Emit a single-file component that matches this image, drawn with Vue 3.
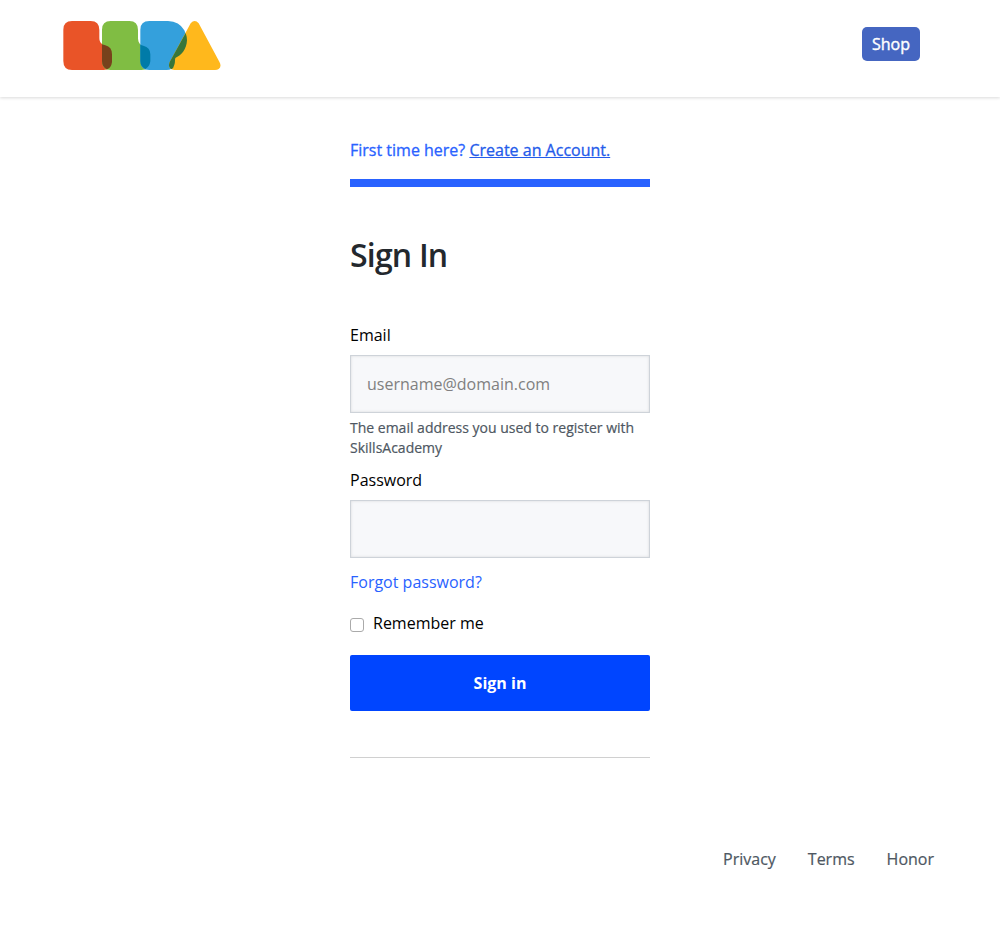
<script setup>
import { ref } from 'vue'

const email = ref('')
const password = ref('')
const remember = ref(false)
const links = ['Privacy', 'Terms', 'Honor']
</script>

<template>
  <div class="page">
    <header class="header">
      <a class="logo" href="#" aria-label="Home">
        <svg width="165" height="51" viewBox="30 30 495 153">
          <path fill="#e95428" d="M66 33H122Q148 33 148 60V84C148 96 155 104 166 106Q186 111 186 133V156Q184 180 160 180H66Q40 180 40 153V59Q40 33 66 33Z" />
          <path fill="#80bd43" d="M182 33H238Q264 33 264 60V86C265 98 270 104 280 107Q301 112 301 133V154Q299 180 274 180H182Q156 180 156 153V59Q156 33 182 33Z" />
          <path fill="#34a0dc" d="M298 33H354Q388 34 403 61Q411 78 411 91C410 119 393 137 376 144C374 151 376 157 373 164Q368 180 350 180H298Q271 180 271 153V59Q271 33 298 33Z" />
          <path fill="#ffb81c" d="M422 40Q434 26 446 40L508 155Q516 169 506 177Q502 180 495 180H373Q354 179 358 160Q359 156 362 151Z" />
          <path fill="#77421c" d="M156 103Q161 105 166 106Q186 111 186 133V156Q184 173 171 178Q156 171 156 153Z" />
          <path fill="#007ba8" d="M271 104Q275 106 280 107Q301 112 301 133V154Q299 170 286 177Q271 170 271 153Z" />
          <path fill="#38763a" d="M407 69Q411 81 411 91C410 119 393 137 376 144C374 151 376 157 373 164Q371 174 364 178Q354 171 358 160Q359 156 362 151Z" />
        </svg>
      </a>
      <a class="shop" href="#">Shop</a>
    </header>

    <main class="login">
      <p class="toggle">First time here? <a href="#">Create an Account.</a></p>
      <h2>Sign In</h2>
      <form @submit.prevent>
        <label class="label" for="email">Email</label>
        <input id="email" v-model="email" class="field" type="email" placeholder="username@domain.com" />
        <p class="tip">The email address you used to register with SkillsAcademy</p>
        <label class="label" for="password">Password</label>
        <input id="password" v-model="password" class="field" type="password" />
        <a class="forgot" href="#">Forgot password?</a>
        <label class="remember">
          <input v-model="remember" type="checkbox" />
          <span>Remember me</span>
        </label>
        <button class="submit" type="submit">Sign in</button>
      </form>
      <hr />
    </main>

    <footer class="footer">
      <a v-for="link in links" :key="link" href="#">{{ link }}</a>
    </footer>
  </div>
</template>

<style>
body {
  background: #fff;
}
</style>

<style scoped>
.page,
.page * {
  box-sizing: border-box;
}
.page {
  min-height: 939px;
  font: 16px/24px "Open Sans", sans-serif;
  color: #000;
}
.header {
  display: flex;
  justify-content: space-between;
  align-items: flex-start;
  height: 97px;
  padding: 20px 80px 0 60px;
  box-shadow: 0 1px 3px rgba(0, 0, 0, 0.15);
}
.logo svg {
  display: block;
}
.shop {
  width: 58px;
  height: 34px;
  margin-top: 7px;
  border-radius: 5px;
  background: #4566c1;
  color: #fff;
  line-height: 34px;
  text-align: center;
  text-decoration: none;
  -webkit-text-stroke: 0.4px currentColor;
}
.login {
  width: 300px;
  margin: 0 auto;
  padding-top: 41px;
}
.toggle {
  height: 49px;
  margin: 0;
  border-bottom: 8px solid #2962ff;
  color: #2962ff;
  white-space: nowrap;
  -webkit-text-stroke: 0.3px currentColor;
}
.toggle a {
  color: #245bea;
}
h2 {
  margin: 47px 0 48px;
  color: #23282d;
  font-size: 32px;
  font-weight: 600;
  line-height: 41px;
  letter-spacing: -0.8px;
}
.label {
  display: block;
  margin-bottom: 8px;
}
.field {
  display: block;
  width: 300px;
  height: 58px;
  padding: 0 16px;
  border: 1px solid #ced3d9;
  border-radius: 0;
  outline: none;
  background: #f7f8fa;
  box-shadow: inset 0 0 3px rgba(0, 0, 0, 0.12);
  font: inherit;
}
.field::placeholder {
  color: #808080;
  opacity: 1;
}
.tip {
  margin: 5px 0 10px;
  color: #4e5762;
  font-size: 14px;
  line-height: 20px;
  -webkit-text-stroke: 0.2px currentColor;
}
.forgot {
  display: block;
  margin-top: 12px;
  color: #2962ff;
  text-decoration: none;
}
.remember {
  display: flex;
  align-items: center;
  gap: 9px;
  margin-top: 17px;
}
.remember input {
  appearance: none;
  width: 14px;
  height: 14px;
  margin: 4px 0 0;
  border: 1px solid #aaa;
  border-radius: 3px;
  background: #fff;
}
.submit {
  display: block;
  width: 300px;
  height: 56px;
  margin-top: 20px;
  padding: 0;
  border: 0;
  border-radius: 2px;
  background: #0045ff;
  color: #fff;
  font: 700 16px/24px "Open Sans", sans-serif;
}
hr {
  margin: 46px 0 0;
  border: 0;
  border-top: 1px solid #d0d0d0;
}
.footer {
  display: flex;
  justify-content: flex-end;
  gap: 32px;
  margin-top: 89px;
  padding-right: 66px;
}
.footer a {
  color: #4e5762;
  text-decoration: none;
  -webkit-text-stroke: 0.2px currentColor;
}
</style>
